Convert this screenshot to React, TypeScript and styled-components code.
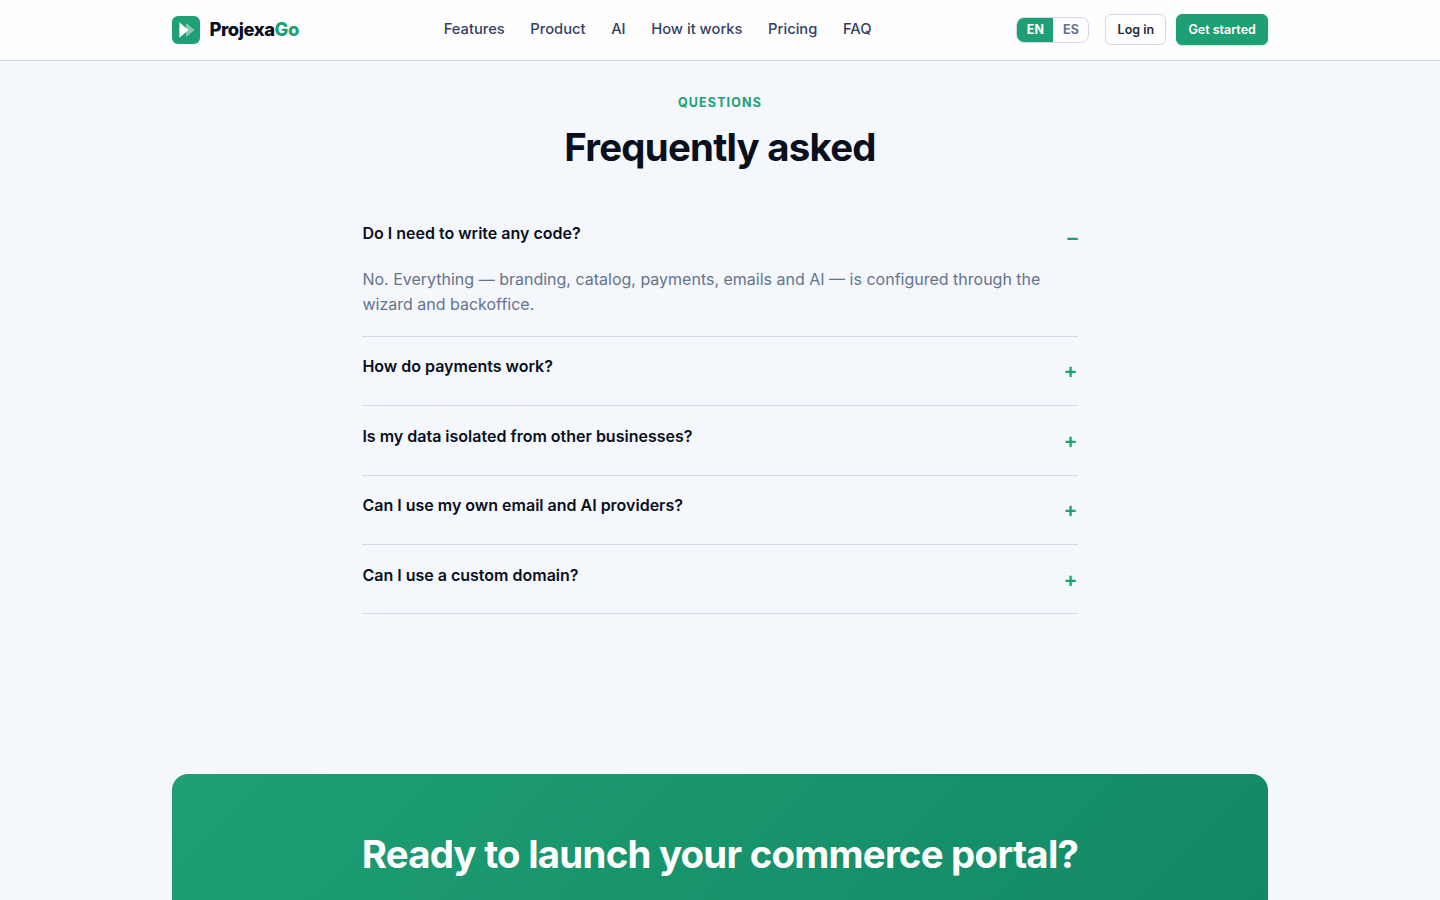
import React, { useState } from "react";
import styled, { createGlobalStyle } from "styled-components";

const GlobalStyle = createGlobalStyle`
  * { box-sizing: border-box; }
  html, body { margin: 0; height: 100%; overflow: hidden; }
  body {
    background: #f4f7fc;
    color: #0a0f1e;
    font-family: Inter, "Liberation Sans", sans-serif;
    font-size: 16px;
  }
  button { font-family: inherit; cursor: pointer; }
`;

const Page = styled.div`
  height: 900px;
  overflow: hidden;
`;

const Header = styled.header`
  height: 61px;
  background: #fefefe;
  border-bottom: 1px solid #d2daea;
`;

const Bar = styled.div`
  width: 1096px;
  height: 60px;
  margin: 0 auto;
  display: flex;
  align-items: center;
  justify-content: space-between;
`;

const Brand = styled.a`
  display: flex;
  align-items: center;
  gap: 9.6px;
  font-size: 18.4px;
  font-weight: 800;
  line-height: 20px;
  letter-spacing: -0.46px;
  svg { display: block; }
  > span { padding-bottom: 2px; }
`;

const Accent = styled.span`
  color: #1f9f75;
`;

const Nav = styled.nav`
  display: flex;
  gap: 25.6px;
  padding-bottom: 2px;
`;

const NavLink = styled.a`
  font-size: 14.72px;
  font-weight: 500;
  color: #334160;
`;

const Actions = styled.div`
  display: flex;
  align-items: center;
  padding-bottom: 1px;
`;

const Languages = styled.div`
  display: flex;
  height: 26px;
  margin-right: 16px;
  border: 1px solid #d2daea;
  border-radius: 8px;
  overflow: hidden;
`;

const Language = styled.button<{ $active?: boolean }>`
  border: 0;
  padding: 0 9.6px;
  font-size: 12.48px;
  font-weight: 700;
  background: ${(p) => (p.$active ? "#1f9f75" : "transparent")};
  color: ${(p) => (p.$active ? "#fff" : "#64748f")};
`;

const Button = styled.button<{ $primary?: boolean }>`
  height: 31px;
  padding: 0 11.2px;
  border-radius: 6px;
  font-size: 12.48px;
  font-weight: 600;
  border: 1px solid ${(p) => (p.$primary ? "#1f9f75" : "#d2daea")};
  background: ${(p) => (p.$primary ? "#1f9f75" : "#fff")};
  color: ${(p) => (p.$primary ? "#fff" : "#1e2940")};
  box-shadow: ${(p) => (p.$primary ? "0 1px 2px rgba(31, 159, 117, 0.25)" : "none")};
  & + & { margin-left: 10px; }
`;

const Faq = styled.section`
  width: 715.2px;
  height: 713px;
  margin: 0 auto;
  padding-top: 34px;
`;

const Eyebrow = styled.p`
  margin: 0;
  line-height: 16px;
  font-size: 12.48px;
  font-weight: 700;
  letter-spacing: 1.15px;
  text-align: center;
  text-transform: uppercase;
  color: #1f9f75;
`;

const Title = styled.h2`
  margin: 12px 0 0;
  line-height: 48px;
  font-size: 38.4px;
  font-weight: 700;
  letter-spacing: -0.768px;
  text-align: center;
`;

const List = styled.div`
  margin-top: 33px;
`;

const Item = styled.div`
  border-bottom: 1px solid #d2daea;
`;

const Question = styled.button<{ $open: boolean }>`
  width: 100%;
  height: ${(p) => (p.$open ? 62.9 : 68.4)}px;
  padding: 19.48px 0;
  border: 0;
  background: none;
  display: flex;
  justify-content: space-between;
  align-items: flex-start;
  text-align: left;
  color: #0a0f1e;
  font-size: 16px;
  font-weight: 600;
  line-height: 20px;
`;

const Sign = styled.span`
  color: #1f9f75;
  font-size: 20.8px;
  line-height: 29.4px;
`;

const Answer = styled.p`
  margin: 0;
  padding: 0 0 19px;
  color: #64748f;
  line-height: 25px;
`;

const Cta = styled.section`
  width: 1096px;
  height: 340px;
  margin: 0 auto;
  padding-top: 56px;
  border-radius: 16px;
  background: linear-gradient(135deg, #1f9f75, #0f8562);
  color: #fff;
  text-align: center;
`;

const CtaTitle = styled.h2`
  margin: 0;
  font-size: 38.4px;
  line-height: 48px;
  font-weight: 700;
  letter-spacing: -0.768px;
`;

const faqs = [
  {
    q: "Do I need to write any code?",
    a: "No. Everything — branding, catalog, payments, emails and AI — is configured through the wizard and backoffice.",
  },
  { q: "How do payments work?" },
  { q: "Is my data isolated from other businesses?" },
  { q: "Can I use my own email and AI providers?" },
  { q: "Can I use a custom domain?" },
];

const links = ["Features", "Product", "AI", "How it works", "Pricing", "FAQ"];

export default function App() {
  const [open, setOpen] = useState(0);
  return (
    <Page>
      <GlobalStyle />
      <Header>
        <Bar>
          <Brand>
            <svg width="28" height="28" viewBox="0 0 28 28">
              <rect width="28" height="28" rx="6" fill="#1f9f75" />
              <path d="M14 7L22.7 14L14 21Z" fill="#fff" opacity=".45" />
              <path d="M7.4 6.2L16.4 14L7.4 21.8Z" fill="#fff" />
            </svg>
            <span>Projexa<Accent>Go</Accent></span>
          </Brand>
          <Nav>{links.map((l) => <NavLink key={l}>{l}</NavLink>)}</Nav>
          <Actions>
            <Languages>
              <Language $active>EN</Language>
              <Language>ES</Language>
            </Languages>
            <Button>Log in</Button>
            <Button $primary>Get started</Button>
          </Actions>
        </Bar>
      </Header>
      <Faq>
        <Eyebrow>Questions</Eyebrow>
        <Title>Frequently asked</Title>
        <List>
          {faqs.map((f, i) => (
            <Item key={f.q}>
              <Question
                $open={open === i}
                onClick={() => setOpen(open === i ? -1 : i)}
              >
                {f.q}
                <Sign>{open === i ? "–" : "+"}</Sign>
              </Question>
              {open === i && f.a && <Answer>{f.a}</Answer>}
            </Item>
          ))}
        </List>
      </Faq>
      <Cta>
        <CtaTitle>Ready to launch your commerce portal?</CtaTitle>
      </Cta>
    </Page>
  );
}
